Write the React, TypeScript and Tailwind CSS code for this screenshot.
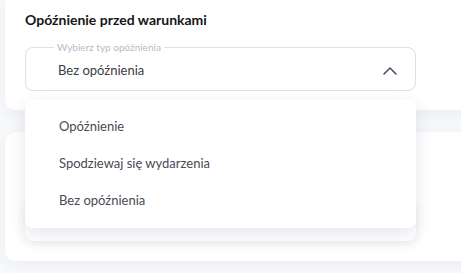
import { ChevronUp } from "lucide-react";

const options = ["Opóźnienie", "Spodziewaj się wydarzenia", "Bez opóźnienia"];

function DelaySelect({ open }: { open?: boolean }) {
  return (
    <div className="relative w-[391px]">
      <div className="h-[44px] rounded-lg border border-[#dfdeea] flex items-center justify-between pl-[32px] pr-[13px] pt-[3px]">
        <span className="text-[13px] text-[#3b3b43]">Bez opóźnienia</span>
        <ChevronUp size={24} strokeWidth={1.6} className="text-[#4b5262]" />
      </div>
      {/* floating label over the border */}
      <span className="absolute left-[29px] -top-[6px] bg-white px-[3px] text-[10px] leading-[12px] text-[#b7bacb]">
        Wybierz typ opóźnienia
      </span>

      {open && (
        <div className="absolute left-0 top-[53px] z-10 w-full rounded-lg bg-white pt-[8px] pb-[9px] shadow-[0_6px_18px_rgba(40,55,100,0.12)]">
          {options.map((opt) => (
            <div
              key={opt}
              className="h-[37px] flex items-center pl-[34px] text-[13px] text-[#4a4a55]"
            >
              {opt}
            </div>
          ))}
        </div>
      )}
    </div>
  );
}

export default function App() {
  return (
    <div
      className="h-[273px] w-[461px] overflow-hidden bg-[#f8f9fb] pl-[5px]"
      style={{ fontFamily: "Lato, 'Open Sans', sans-serif" }}
    >
      <div className="w-[480px] -mt-[6px] rounded-[10px] bg-white pl-[20px] pt-[15px] pb-[19px] shadow-[0_4px_16px_rgba(40,55,100,0.06)] relative z-10">
        <h2 className="text-[14px] font-bold text-[#151515] leading-[22px]">
          Opóźnienie przed warunkami
        </h2>
        <div className="mt-[16px]">
          <DelaySelect open />
        </div>
      </div>

      {/* second card, mostly covered by the open dropdown */}
      <div className="mt-[22px] w-[480px] h-[129px] rounded-[10px] bg-white pl-[20px] pt-[65px] shadow-[0_4px_16px_rgba(40,55,100,0.06)]">
        <div className="h-[44px] w-[391px] rounded-lg bg-white shadow-[0_3px_10px_rgba(40,55,100,0.10)]" />
      </div>
    </div>
  );
}
